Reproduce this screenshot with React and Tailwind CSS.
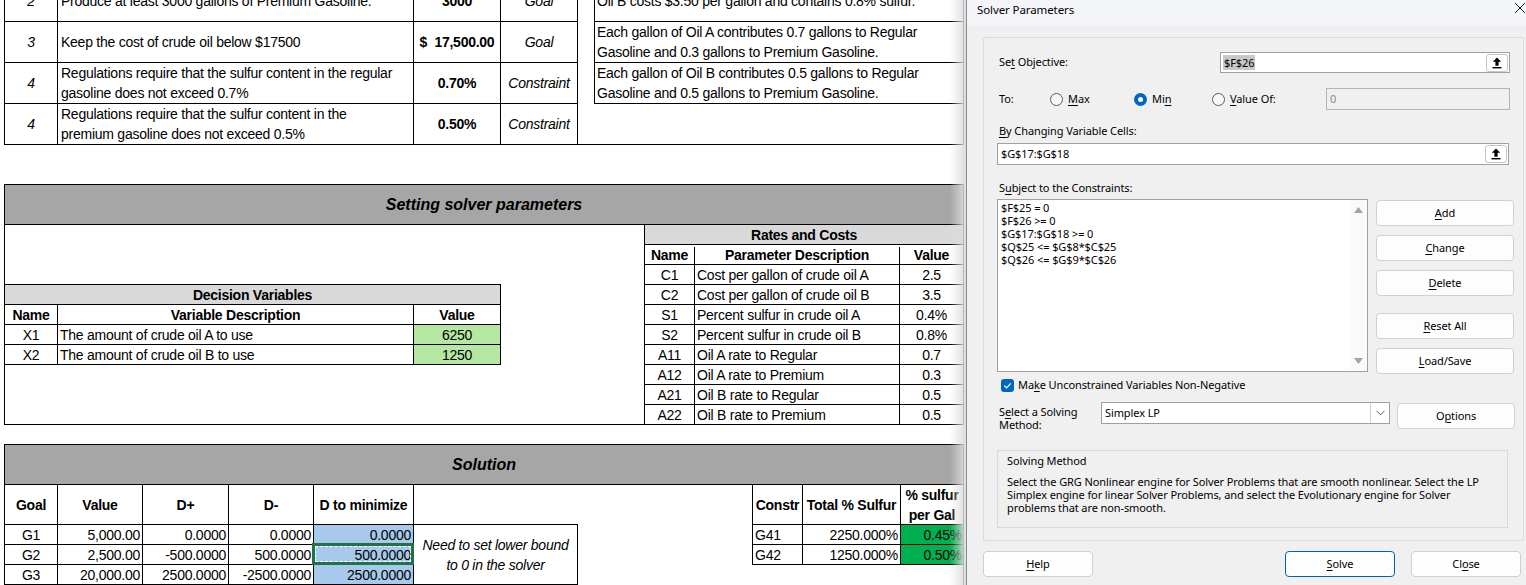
import { Fragment } from "react";

const sheet = "font-['Liberation_Sans',Arial,sans-serif] text-[14px] tracking-[-0.25px] text-black";
const ui = "font-['Noto_Sans',sans-serif] text-[11px] tracking-[-0.1px] text-black";

const topRows = [
  { n: "2", d: ["Produce at least 3000 gallons of Premium Gasoline."], v: "3000", t: "Goal" },
  { n: "3", d: ["Keep the cost of crude oil below $17500"], v: "$  17,500.00", t: "Goal" },
  {
    n: "4",
    d: ["Regulations require that the sulfur content in the regular", "gasoline does not exceed 0.7%"],
    v: "0.70%",
    t: "Constraint"
  },
  {
    n: "4",
    d: ["Regulations require that the sulfur content in the", "premium gasoline does not exceed 0.5%"],
    v: "0.50%",
    t: "Constraint"
  }
];

const notes = [
  ["Oil B costs $3.50 per gallon and contains 0.8% sulfur."],
  ["Each gallon of Oil A contributes 0.7 gallons to Regular", "Gasoline and 0.3 gallons to Premium Gasoline."],
  ["Each gallon of Oil B contributes 0.5 gallons to Regular", "Gasoline and 0.5 gallons to Premium Gasoline."]
];

const rates = [
  ["C1", "Cost per gallon of crude oil A", "2.5"],
  ["C2", "Cost per gallon of crude oil B", "3.5"],
  ["S1", "Percent sulfur in crude oil A", "0.4%"],
  ["S2", "Percent sulfur in crude oil B", "0.8%"],
  ["A11", "Oil A rate to Regular", "0.7"],
  ["A12", "Oil A rate to Premium", "0.3"],
  ["A21", "Oil B rate to Regular", "0.5"],
  ["A22", "Oil B rate to Premium", "0.5"]
];

const goals = [
  ["G1", "5,000.00", "0.0000", "0.0000", "0.0000"],
  ["G2", "2,500.00", "-500.0000", "500.0000", "500.0000"],
  ["G3", "20,000.00", "2500.0000", "-2500.0000", "2500.0000"]
];

const constraints = ["$F$25 = 0", "$F$26 >= 0", "$G$17:$G$18 >= 0", "$Q$25 <= $G$8*$C$25", "$Q$26 <= $G$9*$C$26"];

function TopBox() {
  return (
    <div className="mt-[-19px] flex border-x border-b border-black">
      <div className="grid grid-cols-[53px_356px_87px_77px] grid-rows-[41px_41px_41px_40px]">
        {topRows.map((r, i) => {
          const b = i < 3 ? "border-b" : "";
          return (
            <Fragment key={i}>
              <div className={`flex items-center justify-center italic border-r border-black ${b}`}>{r.n}</div>
              <div className={`flex flex-col justify-center pl-[3px] leading-[20px] border-r border-black ${b}`}>
                {r.d.map((l) => (
                  <span key={l} className="whitespace-nowrap">{l}</span>
                ))}
              </div>
              <div className={`flex items-center justify-center font-bold whitespace-pre border-r border-black ${b}`}>{r.v}</div>
              <div className={`flex items-center justify-center italic border-r border-black ${b}`}>{r.t}</div>
            </Fragment>
          );
        })}
      </div>
      <div className="ml-[16px] flex-1 self-start border-l border-black">
        {notes.map((n, i) => (
          <div key={i} className="h-[41px] border-b border-black flex flex-col justify-center pl-[2px] leading-[20px]">
            {n.map((l) => (
              <span key={l} className="whitespace-nowrap">{l}</span>
            ))}
          </div>
        ))}
      </div>
    </div>
  );
}

function SetupSection() {
  return (
    <div className="mt-[39px] border border-black">
      <div className="h-[40px] bg-[#a6a6a6] border-b border-black flex items-center justify-center pt-[1px] font-bold italic text-[16px] tracking-[0px]">
        Setting solver parameters
      </div>
      <div className="flex h-[199px]">
        <div className="mt-[59px] self-start grid grid-cols-[53px_356px_87px] auto-rows-[20px] border-t border-black">
          <div className="col-span-3 bg-[#d9d9d9] border-r border-b border-black flex items-center justify-center pt-[2px] font-bold">
            Decision Variables
          </div>
          <div className="border-r border-b border-black flex items-center justify-center pt-[2px] font-bold">Name</div>
          <div className="border-r border-b border-black flex items-center justify-center pt-[2px] font-bold">Variable Description</div>
          <div className="border-r border-b border-black flex items-center justify-center pt-[2px] font-bold">Value</div>
          {[
            ["X1", "The amount of crude oil A to use", "6250"],
            ["X2", "The amount of crude oil B to use", "1250"]
          ].map((r) => (
            <Fragment key={r[0]}>
              <div className="border-r border-b border-black flex items-center justify-center pt-[2px]">{r[0]}</div>
              <div className="border-r border-b border-black flex items-center pl-[2px] pt-[2px]">{r[1]}</div>
              <div className="border-r border-b border-black flex items-center justify-center pt-[2px] bg-[#b5e6a2]">{r[2]}</div>
            </Fragment>
          ))}
        </div>
        <div className="ml-auto w-[319px] border-l border-black flex flex-col">
          <div className="h-[20px] shrink-0 border-b border-black bg-[#d9d9d9] flex items-center justify-center pt-[2px] font-bold">
            Rates and Costs
          </div>
          <div className="h-[20px] shrink-0 border-b border-black flex pt-[2px] font-bold">
            <div className="w-[50px] border-r border-black flex items-center justify-center">Name</div>
            <div className="w-[205px] border-r border-black flex items-center justify-center">Parameter Description</div>
            <div className="flex-1 flex items-center justify-center">Value</div>
          </div>
          {rates.map((r, i) => (
            <div key={r[0]} className={`shrink-0 flex border-black ${i < 7 ? "h-[20px] border-b" : "h-[19px]"}`}>
              <div className="w-[50px] border-r border-black flex items-center justify-center pt-[2px]">{r[0]}</div>
              <div className="w-[205px] border-r border-black flex items-center pl-[2px] pt-[2px]">{r[1]}</div>
              <div className="flex-1 flex items-center justify-center pt-[2px]">{r[2]}</div>
            </div>
          ))}
        </div>
      </div>
    </div>
  );
}

function SolutionSection() {
  const cell = "border-r border-b border-black flex items-center";
  return (
    <div className="mt-[19px] border-x border-t border-black">
      <div className="h-[40px] bg-[#a6a6a6] border-b border-black flex items-center justify-center pt-[1px] font-bold italic text-[16px] tracking-[0px]">
        Solution
      </div>
      <div className="flex">
        <div className="grid grid-cols-[53px_85px_86px_85px_100px_164px] grid-rows-[40px_20px_20px_20px]">
          {["Goal", "Value", "D+", "D-", "D to minimize"].map((h) => (
            <div key={h} className={`${cell} justify-center pt-[2px] font-bold`}>{h}</div>
          ))}
          <div className="border-b border-black" />
          {goals.map((g, i) => (
            <Fragment key={g[0]}>
              <div className={`${cell} justify-center pt-[2px]`}>{g[0]}</div>
              <div className={`${cell} justify-end pr-[2px] pt-[2px]`}>{g[1]}</div>
              <div className={`${cell} justify-end pr-[2px] pt-[2px]`}>{g[2]}</div>
              <div className={`${cell} justify-end pr-[2px] pt-[2px]`}>{g[3]}</div>
              <div className={`${cell} relative justify-end pr-[2px] pt-[2px] bg-[#a6c9ec]`}>
                {g[4]}
                {i === 1 && (
                  <div className="absolute -top-[2px] -left-[2px] -right-[1px] -bottom-[1px] border-[3px] border-[#217346]">
                    <div className="absolute inset-0 border border-dashed border-white" />
                  </div>
                )}
              </div>
              {i === 0 && (
                <div className="row-span-3 border-r border-b border-black flex flex-col items-center justify-center pt-[1px] italic leading-[20px]">
                  <span className="whitespace-nowrap">Need to set lower bound</span>
                  <span className="whitespace-nowrap">to 0 in the solver</span>
                </div>
              )}
            </Fragment>
          ))}
        </div>
        <div className="ml-[174px] self-start border-l border-black grid grid-cols-[50px_98px_62px] grid-rows-[40px_20px_20px]">
          <div className="border-r border-b border-black flex items-center justify-center pt-[2px] font-bold">Constr</div>
          <div className="border-r border-b border-black flex items-center justify-center pt-[2px] font-bold">Total % Sulfur</div>
          <div className="border-b border-black flex flex-col items-center justify-center pt-[1px] font-bold leading-[20px]">
            <span>% sulfur</span>
            <span>per Gal</span>
          </div>
          {[
            ["G41", "2250.000%", "0.45%"],
            ["G42", "1250.000%", "0.50%"]
          ].map((r) => (
            <Fragment key={r[0]}>
              <div className="border-r border-b border-black flex items-center pl-[2px] pt-[2px]">{r[0]}</div>
              <div className="border-r border-b border-black flex items-center justify-end pr-[2px] pt-[2px]">{r[1]}</div>
              <div className="border-b border-black flex items-center justify-end pr-[1px] pt-[2px] bg-[#00b050]">{r[2]}</div>
            </Fragment>
          ))}
        </div>
      </div>
    </div>
  );
}

function Sheet() {
  return (
    <div className={`relative w-[966px] h-[585px] shrink-0 overflow-hidden bg-white pl-[4px] ${sheet}`}>
      <div className="w-[960px]">
        <TopBox />
        <SetupSection />
        <SolutionSection />
      </div>
      <div className="absolute top-0 right-0 bottom-0 w-[16px] bg-linear-to-r from-white/0 to-[#dcdcdc]" />
    </div>
  );
}

function UpArrow() {
  return (
    <div className="ml-auto mr-[1px] w-[22px] h-[18px] bg-white border border-[#c6c6c6] rounded-[3px] flex items-center justify-center">
      <svg width="10" height="12" viewBox="0 0 10 12">
        <path d="M5 0.5 L0.8 4.8 H3.4 V8.8 H6.6 V4.8 H9.2 Z" fill="#000" />
        <rect x="0.5" y="10" width="9" height="1.4" fill="#000" />
      </svg>
    </div>
  );
}

function Radio({ checked, children, w }) {
  return (
    <div className={`flex items-center gap-[5px] ${w}`}>
      {checked ? (
        <div className="w-[13px] h-[13px] rounded-full bg-[#0067c0] flex items-center justify-center">
          <div className="w-[5px] h-[5px] rounded-full bg-white" />
        </div>
      ) : (
        <div className="w-[13px] h-[13px] rounded-full border border-[#5c5c5c] bg-[#f7f7f7]" />
      )}
      <span>{children}</span>
    </div>
  );
}

function Btn({ children, className = "" }) {
  return (
    <div
      className={`h-[26px] shrink-0 bg-[#fdfdfd] border rounded-[4px] flex items-center justify-center ${className || "border-[#d0d0d0]"}`}>
      {children}
    </div>
  );
}

function Dialog() {
  return (
    <div className={`flex-1 h-[585px] border-l border-[#8c8c8c] bg-[#f0f0f0] flex flex-col ${ui}`}>
      <div className="h-[25px] shrink-0 bg-[#f3f5f9] flex items-start pl-[10px] pt-[3px] leading-[14px] text-[11.5px]">
        <span>Solver Parameters</span>
        <svg className="ml-auto mt-[-1px]" width="12" height="12" viewBox="0 0 12 12">
          <path d="M1 1 L11 11 M11 1 L1 11" stroke="#222" strokeWidth="1" />
        </svg>
      </div>
      <div className="pl-[16px]">
        <div className="mt-[12px] w-[541px] border border-[#dadada] rounded-[2px] pl-[13px] pb-[12px]">
          <div className="mt-[14px] h-[21px] flex items-center">
            <span className="w-[223px] pl-[2px]">
              Se<u className="underline-offset-2">t</u> Objective:
            </span>
            <div className="w-[290px] h-[21px] bg-white border border-[#a0a0a0] flex items-center pl-[2px]">
              <span className="bg-[#c8c8c8] px-[1px] leading-[15px]">$F$26</span>
              <UpArrow />
            </div>
          </div>
          <div className="mt-[15px] h-[22px] flex items-center">
            <span className="w-[53px] pl-[2px]">To:</span>
            <Radio w="w-[84px]">
              <u className="underline-offset-2">M</u>ax
            </Radio>
            <Radio w="w-[78px]" checked>
              Mi<u className="underline-offset-2">n</u>
            </Radio>
            <Radio w="w-[114px]">
              <u className="underline-offset-2">V</u>alue Of:
            </Radio>
            <div className="w-[184px] h-[22px] bg-[#f0f0f0] border border-[#b4b4b4] flex items-center pl-[3px] text-[#8a8a8a]">
              0
            </div>
          </div>
          <div className="mt-[14px] h-[14px] leading-[14px] pl-[2px]">
            <u className="underline-offset-2">B</u>y Changing Variable Cells:
          </div>
          <div className="mt-[5px] w-[512px] h-[22px] bg-white border border-[#a0a0a0] flex items-center pl-[3px]">
            <span>$G$17:$G$18</span>
            <UpArrow />
          </div>
          <div className="mt-[16px] h-[14px] leading-[14px] pl-[2px]">
            S<u className="underline-offset-2">u</u>bject to the Constraints:
          </div>
          <div className="mt-[4px] h-[173px] flex items-start">
            <div className="w-[371px] h-[173px] bg-white border border-[#a0a0a0] flex">
              <div className="flex-1 pl-[3px] pt-[1px] flex flex-col leading-[13px]">
                {constraints.map((c) => (
                  <span key={c} className="whitespace-pre">{c}</span>
                ))}
              </div>
              <div className="w-[17px] bg-[#fafafa] flex flex-col items-center justify-between py-[7px]">
                <svg width="9" height="6" viewBox="0 0 9 6">
                  <path d="M4.5 0 L9 6 H0 Z" fill="#a3a3a3" />
                </svg>
                <svg width="9" height="6" viewBox="0 0 9 6">
                  <path d="M0 0 H9 L4.5 6 Z" fill="#a3a3a3" />
                </svg>
              </div>
            </div>
            <div className="ml-[8px] w-[138px] mt-[1px] flex flex-col">
              <Btn>
                <span><u className="underline-offset-2">A</u>dd</span>
              </Btn>
              <div className="mt-[9px]">
                <Btn>
                  <span><u className="underline-offset-2">C</u>hange</span>
                </Btn>
              </div>
              <div className="mt-[9px]">
                <Btn>
                  <span><u className="underline-offset-2">D</u>elete</span>
                </Btn>
              </div>
              <div className="mt-[17px]">
                <Btn>
                  <span><u className="underline-offset-2">R</u>eset All</span>
                </Btn>
              </div>
              <div className="mt-[9px]">
                <Btn>
                  <span><u className="underline-offset-2">L</u>oad/Save</span>
                </Btn>
              </div>
            </div>
          </div>
          <div className="mt-[6px] h-[14px] flex items-center pl-[4px] gap-[4px]">
            <svg width="13" height="13" viewBox="0 0 13 13">
              <rect width="13" height="13" rx="3" fill="#0067c0" />
              <path d="M3.2 6.6 L5.5 8.8 L9.8 4.3" stroke="#fff" strokeWidth="1.2" fill="none" />
            </svg>
            <span>
              Ma<u className="underline-offset-2">k</u>e Unconstrained Variables Non-Negative
            </span>
          </div>
          <div className="mt-[10px] h-[27px] flex items-start">
            <div className="w-[104px] pl-[2px] pt-[3px] leading-[13px]">
              <div>
                S<u className="underline-offset-2">e</u>lect a Solving
              </div>
              <div>Method:</div>
            </div>
            <div className="w-[289px] h-[22px] bg-white border border-[#a0a0a0] flex">
              <span className="flex-1 flex items-center pl-[3px]">Simplex LP</span>
              <div className="w-[19px] border-l border-[#cfcfcf] flex items-center justify-center">
                <svg width="9" height="6" viewBox="0 0 9 6">
                  <path d="M0.5 0.8 L4.5 4.8 L8.5 0.8" stroke="#606060" strokeWidth="1" fill="none" />
                </svg>
              </div>
            </div>
            <div className="ml-[7px] mt-[1px] w-[118px]">
              <Btn>
                <span>O<u className="underline-offset-2">p</u>tions</span>
              </Btn>
            </div>
          </div>
          <div className="mt-[21px] w-[511px] h-[78px] border border-[#d9d9d9] pl-[9px] pt-[3px]">
            <div className="leading-[14px]">Solving Method</div>
            <div className="mt-[7px] leading-[13px]">
              <div className="whitespace-nowrap">
                Select the GRG Nonlinear engine for Solver Problems that are smooth nonlinear. Select the LP
              </div>
              <div className="whitespace-nowrap">
                Simplex engine for linear Solver Problems, and select the Evolutionary engine for Solver
              </div>
              <div className="whitespace-nowrap">problems that are non-smooth.</div>
            </div>
          </div>
        </div>
        <div className="mt-[10px] flex">
          <div className="w-[110px]">
            <Btn>
              <span><u className="underline-offset-2">H</u>elp</span>
            </Btn>
          </div>
          <div className="ml-[192px] w-[110px]">
            <Btn className="border-[#005fb8]">
              <span><u className="underline-offset-2">S</u>olve</span>
            </Btn>
          </div>
          <div className="ml-[16px] w-[110px]">
            <Btn>
              <span>Cl<u className="underline-offset-2">o</u>se</span>
            </Btn>
          </div>
        </div>
      </div>
    </div>
  );
}

export default function App() {
  return (
    <div className="w-[1526px] h-[585px] flex overflow-hidden bg-white">
      <Sheet />
      <Dialog />
    </div>
  );
}
